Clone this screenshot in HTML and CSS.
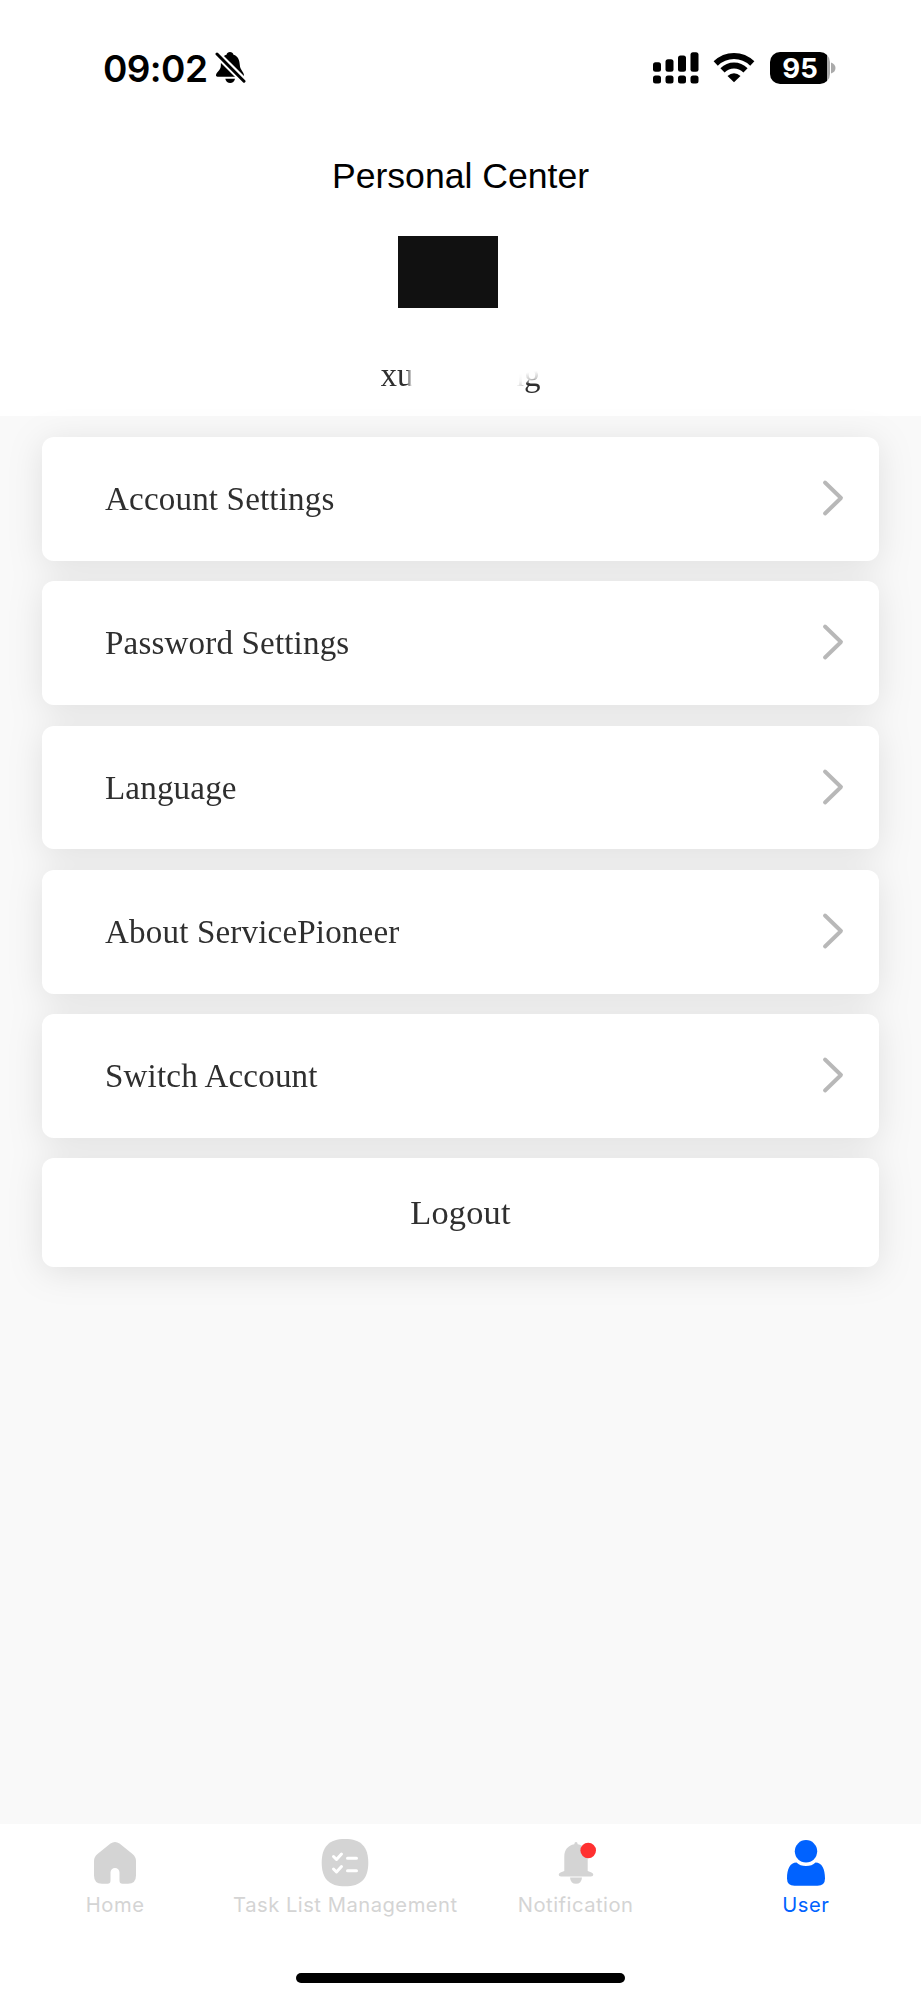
FILE: index.html
```
<!DOCTYPE html>
<html lang="en">

<head>
    <meta charset="UTF-8">
    <meta name="viewport" content="width=device-width, initial-scale=1.0">
    <title>Personal Center</title>
    <link rel="stylesheet" href="styles.css">
</head>

<body>
    <header class="top">
        <div class="status-bar">
            <div class="status-left">
                <span class="time">09:02</span>
                <svg class="bell-off" width="32" height="34" viewBox="0 0 32 34">
                    <path d="M1 24.500C1 21 5.500 20 5.800 15C6 8.500 7 5 11.500 3.700C12 1.800 13.200 1 15 1C16.800 1 18 1.800 18.500 3.700C23 5 24.500 9 24.800 14C25 19 29 21 29 24.500C29 25.300 28.500 25.700 27.500 25.700H2.500C1.500 25.700 1 25.300 1 24.500Z" />
                    <path d="M10.300 27.700H20C19.500 30.500 17.500 32 15.200 32C12.800 32 10.800 30.500 10.300 27.700Z" />
                    <path class="slash-gap" d="M-1 0L31 32" />
                    <path class="slash" d="M2 3L29 30.200" />
                </svg>
            </div>
            <div class="status-right">
                <svg class="signal" width="46" height="32" viewBox="0 0 46 32">
                    <rect x="0" y="10.200" width="8" height="9.500" rx="2.500" />
                    <rect x="12.500" y="7.300" width="8" height="12.400" rx="2.500" />
                    <rect x="25" y="3.600" width="8" height="16.100" rx="2.500" />
                    <rect x="37.500" y="0.300" width="8" height="19.400" rx="2.500" />
                    <rect x="0" y="23.500" width="8" height="8" rx="2.500" />
                    <rect x="12.500" y="23.500" width="8" height="8" rx="2.500" />
                    <rect x="25" y="23.500" width="8" height="8" rx="2.500" />
                    <rect x="37.500" y="23.500" width="8" height="8" rx="2.500" />
                </svg>
                <svg class="wifi" width="42" height="32" viewBox="0 0 42 32">
                    <path class="wifi-arc" d="M2.700 11.500Q10.500 4 21 4T39.300 11.500" />
                    <path class="wifi-arc" d="M9.500 18.300Q14.500 13.500 21 13.500T32.500 18.300" />
                    <path d="M21 30.300L14.500 24Q17.500 21.300 21 21.300T27.500 24Z" />
                </svg>
                <div class="battery">
                    <span class="battery-level">95</span>
                    <svg class="battery-nub" width="5" height="12" viewBox="0 0 5 12">
                        <path d="M0 0.500Q4.500 2 4.500 6T0 11.500Z" />
                    </svg>
                </div>
            </div>
        </div>
        <h1 class="title">Personal Center</h1>
        <div class="avatar"></div>
        <div class="username">
            <span class="name-start">xu</span>
            <span class="name-end">ng</span>
        </div>
    </header>

    <main class="menu">
        <div class="menu-item">
            <span>Account Settings</span>
            <svg class="arrow" width="22" height="38" viewBox="0 0 22 38"><path d="M3 3.500L19 19L3 34.500" /></svg>
        </div>
        <div class="menu-item">
            <span>Password Settings</span>
            <svg class="arrow" width="22" height="38" viewBox="0 0 22 38"><path d="M3 3.500L19 19L3 34.500" /></svg>
        </div>
        <div class="menu-item">
            <span>Language</span>
            <svg class="arrow" width="22" height="38" viewBox="0 0 22 38"><path d="M3 3.500L19 19L3 34.500" /></svg>
        </div>
        <div class="menu-item">
            <span>About ServicePioneer</span>
            <svg class="arrow" width="22" height="38" viewBox="0 0 22 38"><path d="M3 3.500L19 19L3 34.500" /></svg>
        </div>
        <div class="menu-item">
            <span>Switch Account</span>
            <svg class="arrow" width="22" height="38" viewBox="0 0 22 38"><path d="M3 3.500L19 19L3 34.500" /></svg>
        </div>
        <div class="menu-item logout">Logout</div>
    </main>

    <footer class="bottom">
        <nav class="tabs">
            <div class="tab">
                <svg class="tab-icon" width="48" height="48" viewBox="0 0 48 48">
                    <path d="M19.500 4.500Q24 1.500 28.500 4.500L41.500 15Q45 18 45 22V36.500Q45 44.700 37 44.700H31.500Q28.500 44.700 28.500 41.500V33.500A4.500 4.500 0 0 0 19.500 33.500V41.500Q19.500 44.700 16.500 44.700H11Q3 44.700 3 36.500V22Q3 18 6.500 15Z" />
                </svg>
                <span class="tab-label">Home</span>
            </div>
            <div class="tab">
                <svg class="tab-icon" width="48" height="48" viewBox="0 0 48 48">
                    <path d="M24 0C40 0 47.300 8 47.300 23.700C47.300 39.500 40 47.300 24 47.300C8 47.300 0.700 39.500 0.700 23.700C0.700 8 8 0 24 0Z" />
                    <path class="check" d="M12.500 17.500L15.500 20.500L20.500 15M12.500 30L15.500 33L20.500 27.500M26.500 19.200H35.500M26.500 31.700H35.500" />
                </svg>
                <span class="tab-label">Task List Management</span>
            </div>
            <div class="tab">
                <svg class="tab-icon" width="48" height="48" viewBox="0 0 48 48">
                    <path d="M24 3Q25.500 3 25.700 5.300C32 6.500 35.700 11 35.700 17.500V32L39.500 33.500Q41.300 34.500 41.300 35.500Q41.300 37.600 39 37.600H9Q6.700 37.600 6.700 35.500Q6.700 34.500 8.500 33.500L12.300 32V17.500C12.300 11 16 6.500 22.300 5.300Q22.500 3 24 3Z" />
                    <path d="M18 38.400H30Q29.500 44.700 24 44.700T18 38.400Z" />
                    <circle class="dot" cx="36.200" cy="11.500" r="7.800" />
                </svg>
                <span class="tab-label">Notification</span>
            </div>
            <div class="tab active">
                <svg class="tab-icon" width="48" height="48" viewBox="0 0 48 48">
                    <circle cx="24" cy="12.300" r="11.200" />
                    <path d="M14.500 23.500Q18 27 24 27T33.500 23.500C40 23.500 43 30 43 39.500Q43 46.700 35.500 46.700H12.500Q5 46.700 5 39.500C5 30 8 23.500 14.500 23.500Z" />
                </svg>
                <span class="tab-label">User</span>
            </div>
        </nav>
        <div class="home-bar"></div>
    </footer>
</body>

</html>
```

FILE: styles.css
```
* {
    padding: 0;
    margin: 0;
    box-sizing: border-box;
}

body {
    display: flex;
    flex-direction: column;
    height: 2000px;
    background-color: #f9f9f9;
    font-family: 'Liberation Serif', 'Times New Roman', serif;
    color: #2f2f2f;
}

.top {
    display: flex;
    flex-direction: column;
    align-items: center;
    height: 416px;
    background-color: #fff;
}

.status-bar {
    display: flex;
    justify-content: space-between;
    align-items: center;
    width: 100%;
    height: 136px;
    padding: 0 85px 0 103px;
    font-family: Inter, sans-serif;
    color: #000;
}

.status-left,
.status-right {
    display: flex;
    align-items: center;
}

.time {
    font-size: 37px;
    font-weight: 600;
    width: 112px;
    letter-spacing: -0.6px;
}

.slash-gap,
.slash {
    stroke: #fff;
    stroke-width: 7;
}

.slash {
    stroke: #000;
    stroke-width: 3;
    stroke-linecap: round;
}

.wifi {
    margin: 0 15px 0 14px;
}

.wifi-arc {
    fill: none;
    stroke: #000;
    stroke-width: 6;
}

.battery {
    display: flex;
    align-items: center;
}

.battery-level {
    width: 60px;
    height: 32px;
    border-radius: 10px;
    background: linear-gradient(to right, #000 57px, #aaa 57px);
    color: #fff;
    font-size: 27.5px;
    font-weight: 700;
    line-height: 32px;
    text-align: center;
}

.battery-nub {
    margin-left: 1px;
    fill: #aaa;
}

.title {
    height: 100px;
    padding-top: 20px;
    font-family: 'Liberation Sans', Arial, sans-serif;
    font-size: 35.6px;
    font-weight: 400;
    line-height: 40px;
    color: #000;
}

.avatar {
    width: 100px;
    height: 72px;
    margin-right: 25px;
    background-color: #111;
}

.username {
    display: flex;
    justify-content: space-between;
    width: 160px;
    margin-top: 48px;
    font-size: 33px;
    line-height: 38px;
}

/* middle of the name is faded out */
.name-start {
    -webkit-mask-image: linear-gradient(to right, #000 26px, transparent 31px);
    mask-image: linear-gradient(to right, #000 26px, transparent 31px);
}

.name-end {
    mask-image: linear-gradient(170deg, transparent 45%, rgba(0, 0, 0, 0.25) 62%, #000 72%), linear-gradient(to right, transparent 20%, rgba(0, 0, 0, 0.25) 48%, #000 54%);
    mask-composite: intersect;
}

.menu {
    flex: 1;
    display: flex;
    flex-direction: column;
    gap: 20.4px;
    padding: 21px 42px 0;
    filter: drop-shadow(0 5px 17px rgba(0, 0, 0, 0.1));
}

.menu-item {
    display: flex;
    justify-content: space-between;
    align-items: center;
    height: 123.9px;
    padding: 0 35px 2px 63px;
    border-radius: 12px;
    background-color: #fff;
    font-size: 33.1px;
    letter-spacing: 0.16px;
}

.menu-item span {
    padding-top: 3px;
}

.arrow {
    fill: none;
    stroke: #b8b8b8;
    stroke-width: 3.9;
    stroke-linecap: round;
    stroke-linejoin: round;
}

.logout {
    justify-content: center;
    height: 108.5px;
    padding: 0;
    font-size: 34.4px;
}

.bottom {
    display: flex;
    flex-direction: column;
    align-items: center;
    height: 176px;
    background-color: #fff;
}

.tabs {
    display: flex;
    width: 100%;
    height: 149px;
    padding-top: 15px;
}

.tab {
    flex: 1;
    display: flex;
    flex-direction: column;
    align-items: center;
    fill: #d4d4d4;
    color: #d4d4d4;
}

.tab-label {
    margin-top: 6px;
    font-family: Inter, sans-serif;
    font-size: 20.2px;
    font-weight: 400;
    line-height: 24px;
    letter-spacing: 0.5px;
    white-space: nowrap;
}

.check {
    fill: none;
    stroke: #fff;
    stroke-width: 3;
    stroke-linecap: round;
    stroke-linejoin: round;
}

.dot {
    fill: #ff3030;
}

.active {
    fill: #0062ff;
    color: #0062ff;
}

.home-bar {
    width: 329px;
    height: 10px;
    border-radius: 5px;
    background-color: #000;
}
```
